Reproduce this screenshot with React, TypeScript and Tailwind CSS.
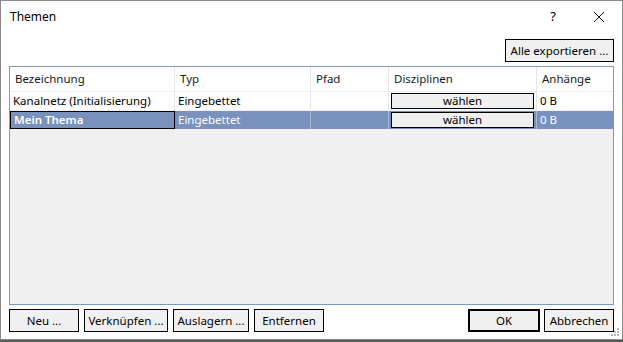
import React from "react";

const font = { fontFamily: '"Noto Sans", "Liberation Sans", sans-serif' };

function Btn({ label, className = "" }: { label: string; className?: string }) {
  return (
    <button
      className={`h-[23px] border border-black bg-[#f0f0f0] text-[11.5px] leading-none text-black flex items-center justify-center ${className}`}
    >
      {label}
    </button>
  );
}

const cols = [
  { name: "Bezeichnung", w: "w-[165px]" },
  { name: "Typ", w: "w-[136px]" },
  { name: "Pfad", w: "w-[78px]" },
  { name: "Disziplinen", w: "w-[148px]" },
  { name: "Anhänge", w: "flex-1" },
];

const rows = [
  { name: "Kanalnetz (Initialisierung)", typ: "Eingebettet", size: "0 B", selected: false },
  { name: "Mein Thema", typ: "Eingebettet", size: "0 B", selected: true },
];

function Grip() {
  const dots = [
    [10, 2],
    [7, 5],
    [10, 5],
    [4, 8],
    [7, 8],
    [10, 8],
  ];
  return (
    <svg width="13" height="11" className="absolute right-[2px] bottom-[2px]">
      {dots.map(([x, y], i) => (
        <rect key={i} x={x} y={y} width="2" height="2" fill="#b8b8b8" />
      ))}
    </svg>
  );
}

export default function App() {
  return (
    <div className="w-[623px] h-[342px] bg-[#5a5a5a] text-[11.5px] text-black" style={font}>
      <div className="relative w-[623px] h-[340px] bg-white border border-[#8a8a8a] flex flex-col">
        {/* title bar */}
        <div className="h-[31px] flex items-center pl-[9px] shrink-0">
          <span className="text-[12px]">Themen</span>
          <div className="ml-auto flex items-center">
            <span className="text-[13px] w-[46px] text-center">?</span>
            <svg width="46" height="14" viewBox="0 0 46 14">
              <path d="M18 2 L28 12 M28 2 L18 12" stroke="#111" strokeWidth="1" />
            </svg>
          </div>
        </div>

        {/* body */}
        <div className="flex-1 flex flex-col px-[8px]">
          <div className="flex justify-end mt-[7px]">
            <Btn label="Alle exportieren ..." className="w-[109px] h-[22px]" />
          </div>

          <div className="mt-[4px] h-[239px] border border-[#7a9ac2] bg-[#f0f0f0] flex flex-col">
            {/* header */}
            <div className="flex h-[24px] bg-white">
              {cols.map((c, i) => (
                <div
                  key={c.name}
                  className={`${c.w} flex items-center pl-[5px] text-[#1a1a1a] ${i < cols.length - 1 ? "border-r border-[#e5e5e5]" : ""}`}
                >
                  {c.name}
                </div>
              ))}
            </div>
            {rows.map((r) => (
              <div
                key={r.name}
                className={`flex h-[19px] border-t border-[#f0f0f0] ${r.selected ? "bg-[#7891bd] text-white" : "bg-white text-black"}`}
              >
                <div
                  className={`w-[165px] flex items-center pl-[3px] border-r ${r.selected ? "border border-black font-semibold" : "border-[#e5e5e5]"}`}
                >
                  {r.name}
                </div>
                <div className={`w-[136px] flex items-center pl-[3px] border-r ${r.selected ? "border-[#a9b8d4]" : "border-[#e5e5e5]"}`}>
                  {r.typ}
                </div>
                <div className={`w-[78px] border-r ${r.selected ? "border-[#a9b8d4]" : "border-[#e5e5e5]"}`} />
                <div className={`w-[148px] flex items-center pl-[2px] border-r ${r.selected ? "border-[#a9b8d4]" : "border-[#e5e5e5]"}`}>
                  <div className="w-[143px] h-[16px] border border-black bg-[#f0f0f0] text-black flex items-center justify-center">
                    wählen
                  </div>
                </div>
                <div className="flex-1 flex items-center pl-[3px]">{r.size}</div>
              </div>
            ))}
          </div>

          <div className="flex mt-[4px] items-center">
            <div className="flex gap-[5px]">
              <Btn label="Neu ..." className="w-[70px]" />
              <Btn label="Verknüpfen ..." className="w-[84px]" />
              <Btn label="Auslagern ..." className="w-[76px]" />
              <Btn label="Entfernen" className="w-[70px]" />
            </div>
            <div className="ml-auto flex gap-[4px]">
              <Btn label="OK" className="w-[72px] border-2" />
              <Btn label="Abbrechen" className="w-[70px]" />
            </div>
          </div>
        </div>
        <Grip />
      </div>
    </div>
  );
}
